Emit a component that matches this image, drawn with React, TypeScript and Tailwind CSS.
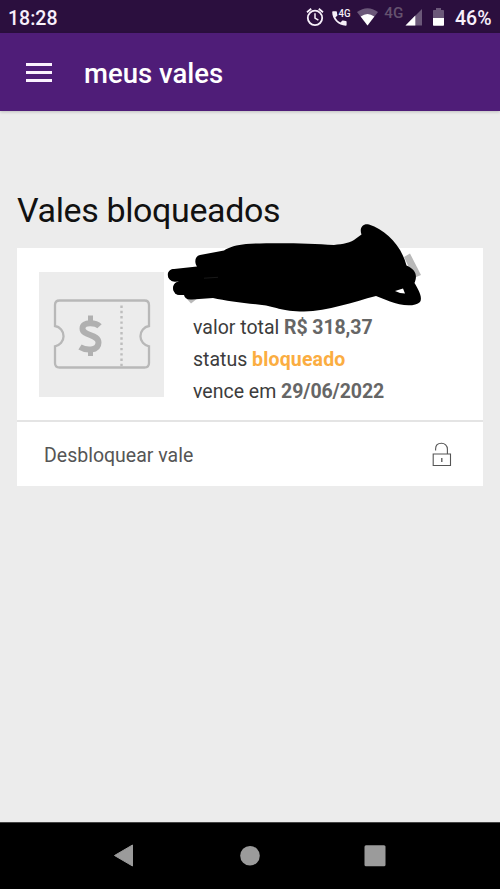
import type { ReactNode } from 'react';

function StatusIcons() {
  return (
    <svg width="150" height="34" viewBox="300 0 150 34" className="block">
      {/* alarm */}
      <g fill="none" stroke="#f6eff9" strokeWidth="1.8">
        <circle cx="315" cy="17.9" r="7.2" />
        <path d="M315 13.3v4.8l3.4 2.1" strokeWidth="1.5" />
        <path d="M307 12.2l4.200-3.500M323 12.2l-4.200-3.500" />
      </g>
      {/* call over 4G */}
      <path
        d="M333 11.3h3.1c.5 0 .8.3.8.8 0 1 .2 1.9.5 2.8.1.3 0 .6-.2.8l-1.8 1.8c1.2 2.3 2.7 3.8 5 5l1.8-1.8c.2-.2.5-.3.8-.2.9.3 1.8.5 2.8.5.5 0 .8.3.8.8v3.1c0 .5-.3.8-.8.8-7.5 0-13.6-6.1-13.6-13.6 0-.5.3-.8.8-.8z"
        fill="#f6eff9"
      />
      <text x="338.6" y="17.200" fontSize="11.500" fontWeight="500" fill="#f6eff9" textLength="12" lengthAdjust="spacingAndGlyphs">
        4G
      </text>
      {/* wifi */}
      <path d="M357 12Q367.500 4.400 378 12L367.500 25.400z" fill="#6b5879" />
      <path d="M360.700 16.500Q367.500 11.500 374.300 16.500L367.500 25.400z" fill="#fff" />
      <text x="384.300" y="18.300" fontSize="14" fontWeight="500" fill="#65526f" textLength="19" lengthAdjust="spacingAndGlyphs">
        4G
      </text>
      {/* signal */}
      <path d="M405.500 25.400L422 8.900V25.400z" fill="#6b5879" />
      <path d="M405.500 25.400L415.300 15.600V25.400z" fill="#fff" />
      {/* battery */}
      <path d="M436 8h5v2h2c.6 0 1 .4 1 1v7.500h-11V11c0-.6.4-1 1-1h2z" fill="#6b5879" />
      <path d="M433 18h11v6.800c0 .6-.4 1-1 1h-9c-.6 0-1-.4-1-1z" fill="#fff" />
    </svg>
  );
}

function TicketIcon() {
  return (
    <svg width="125" height="125" viewBox="0 0 125 125" className="block">
      <path
        d="M20.500 29.500H105.500Q110 29.500 110 34V55A10.300 10.300 0 0 0 110 75.300V92Q110 96.500 105.500 96.500H20.500Q16 96.500 16 92V75.300A10.300 10.300 0 0 0 16 55V34Q16 29.500 20.500 29.500z"
        fill="none"
        stroke="#b8b8b8"
        strokeWidth="2.300"
      />
      <path d="M82.500 34.500V95" stroke="#bdbdbd" strokeWidth="2.400" strokeDasharray="2.400 2.900" fill="none" />
      <path d="M60.500 55.200C57 51.500 43.500 50 43.500 57.400C43.500 65 59.500 63 59.500 71.500C59.500 80.500 46.500 79.500 41 76" fill="none" stroke="#b0b0b0" strokeWidth="6" />
      <path d="M49 44.500H54V53H49zM49 77H54V85H49z" fill="#b0b0b0" />
    </svg>
  );
}

function UnlockIcon() {
  return (
    <svg width="20" height="26" viewBox="0 0 20 26" fill="none" stroke="#555" strokeWidth="1.100">
      <path d="M3.600 8.500V7C3.600 3 6.300 1.200 9.500 1.200S15.400 3.500 15.400 7V12" />
      <path d="M1.200 12h17.300v11.500h-17.300z" />
      <path d="M9.800 16v4" strokeWidth="1.300" />
    </svg>
  );
}

// black marker covering the voucher name
function Scribble() {
  return (
    <svg width="290" height="100" viewBox="150 215 290 100" className="absolute -top-[33px] left-[133px]">
      <path d="M404 257L410 253.500L421 275L414 278z" fill="#b9b9b9" />
      <path d="M187 299L191 303.500L198 298z" fill="#b9b9b9" />
      <path
        fillRule="evenodd"
        d="M174 269L197 266.500C194 262 195 256 200 255L224 250.500C229 247 237 245 246 244C270 242.500 308 243 334 245C343 244 351 243 356 238.500L361.500 234.500C359 228 363 223 369 224.500C386 230 401 245 406.500 265.500C415 269 418 275 414.500 283C418 289 423 297 420 302C415 307 401 306 390 301.500L376 296C353 302 328 311 304 311.500C282 311.500 273 306 262 305C244 303 226 301 213 298L192 299.500C187 300 184.500 298 184 295C175 295.500 171 289 174 284.500C175 282.500 177 281.800 180 281.300C170 282.500 167 277.500 168 273C169 270.500 171 269 174 269zM395 291L403 288.500L405 293.500Q400 293.500 395 291z"
        fill="#000"
      />
      <circle cx="174.500" cy="275.300" r="6.300" />
      <circle cx="179.500" cy="288.800" r="6.300" />
      <path d="M204 278.200L218 277.300" stroke="#242424" strokeWidth=".7" />
    </svg>
  );
}

function InfoLine({ label, children }: { label: string; children: ReactNode }) {
  return (
    <div className="h-8 leading-8 whitespace-nowrap">
      {label} {children}
    </div>
  );
}

export default function App() {
  return (
    <div className="flex flex-col w-[500px] h-[889px] overflow-hidden bg-[#ececec] font-[Roboto,sans-serif]">
      <div className="flex h-[33px] shrink-0 items-center bg-[#2b0f3e] text-[#f8f0fb] font-medium">
        <span className="w-[300px] pl-2 pt-1 text-[19.500px]">18:28</span>
        <StatusIcons />
        <span className="pl-[5px] pt-1 text-[19.500px]">46%</span>
      </div>

      <header className="flex h-[78px] shrink-0 items-center bg-[#4f1d78] text-white shadow-[0_1px_3px_rgba(0,0,0,0.2)]">
        <button className="ml-[26px] flex w-[58px] flex-col gap-[5px]">
          <span className="h-[3px] w-[26px] bg-[#fbf2ff]" />
          <span className="h-[3px] w-[26px] bg-[#fbf2ff]" />
          <span className="h-[3px] w-[26px] bg-[#fbf2ff]" />
        </button>
        <h1 className="pt-[3px] text-[27.500px] font-medium">meus vales</h1>
      </header>

      <main className="flex-1 px-[17px] pt-[79px]">
        <h2 className="h-[58px] text-[34px] leading-10 tracking-[-0.37px] text-[#111] whitespace-nowrap">Vales bloqueados</h2>

        <section className="relative bg-white">
          <div className="flex h-[172px] pl-[22px] pt-[23px]">
            <div className="mt-px h-[125px] w-[125px] shrink-0 bg-[#ececec]">
              <div className="-mt-px">
                <TicketIcon />
              </div>
            </div>
            <div className="pl-[29px] pt-[41px] text-[19.500px] text-[#3c3c3c]">
              <InfoLine label="valor total">
                <b className="tracking-[-0.1px] text-[#666]">R$ 318,37</b>
              </InfoLine>
              <InfoLine label="status">
                <b className="tracking-[0.15px] text-[#fbad41]">bloqueado</b>
              </InfoLine>
              <InfoLine label="vence em">
                <b className="tracking-[-0.1px] text-[#666]">29/06/2022</b>
              </InfoLine>
            </div>
          </div>
          <button className="flex h-[66px] w-full items-center justify-between border-t-2 border-[#e4e4e4] pl-[27px] pr-[31px] text-[19.500px] text-[#555]">
            <span className="pt-1">Desbloquear vale</span>
            <span className="pt-0.5">
              <UnlockIcon />
            </span>
          </button>
          <Scribble />
        </section>
      </main>

      <nav className="flex h-[67px] shrink-0 items-center border-t border-[#444] bg-black">
        <svg width="500" height="66" viewBox="0 823 500 66" fill="#9b9b9b">
          <path d="M114.500 855.500L132.500 845V866z" stroke="#9b9b9b" strokeWidth="1" strokeLinejoin="round" />
          <circle cx="250" cy="855.700" r="9.800" />
          <rect x="364.500" y="845.200" width="21" height="21" rx="1.500" />
        </svg>
      </nav>
    </div>
  );
}
